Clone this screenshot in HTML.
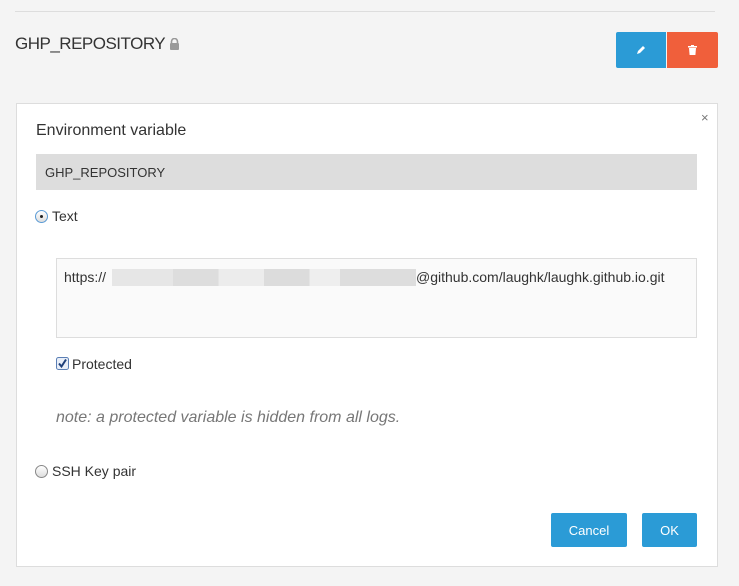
<!DOCTYPE html>
<html><head><style>
body{margin:0;width:739px;height:586px;background:#f4f4f4;font-family:"Liberation Sans",sans-serif;color:#333;position:relative;overflow:hidden}
.a{position:absolute}
.btn{position:absolute;color:#fff;font-size:13px;display:flex;align-items:center;justify-content:center;border-radius:2px}
.radio{position:absolute;width:11px;height:11px;border:1px solid #888;border-radius:50%;background:linear-gradient(#fff,#ddd)}
</style></head><body>
<div class="a" style="left:15px;top:11px;width:700px;height:1px;background:#ddd"></div>
<div class="a" style="left:15px;top:34px;font-size:17px;letter-spacing:-0.5px">GHP_REPOSITORY <svg width="11" height="12" viewBox="0 0 11 12" style="vertical-align:-1px"><path d="M2.5 5V3.5a3 3 0 0 1 6 0V5" fill="none" stroke="#999" stroke-width="1.6"/><rect x="1" y="5" width="9" height="7" rx="1" fill="#999"/></svg></div>
<div class="btn" style="left:616px;top:32px;width:50px;height:36px;background:#2b9bd6;border-radius:2px 0 0 2px"><svg width="10" height="10" viewBox="0 0 10 10"><path d="M1 9l1-3 5-5 2 2-5 5z" fill="#fff"/></svg></div>
<div class="btn" style="left:667px;top:32px;width:51px;height:36px;background:#f05f3b;border-radius:0 2px 2px 0"><svg width="9" height="10" viewBox="0 0 9 10"><rect x="0" y="1" width="9" height="1.5" fill="#fff"/><rect x="3" y="0" width="3" height="1.5" fill="#fff"/><path d="M1 3h7l-.6 7H1.6z" fill="#fff"/></svg></div>
<div class="a" style="left:16px;top:103px;width:700px;height:462px;background:#fff;border:1px solid #ddd"></div>
<div class="a" style="left:701px;top:110px;font-size:13px;color:#777">×</div>
<div class="a" style="left:36px;top:122px;font-size:16px">Environment variable</div>
<div class="a" style="left:36px;top:154px;width:661px;height:36px;background:#ddd"></div>
<div class="a" style="left:45px;top:165px;font-size:13px">GHP_REPOSITORY</div>
<div class="radio" style="left:35px;top:210px;border-color:#5b9bd5"><div style="position:absolute;left:4px;top:4px;width:3px;height:3px;border-radius:50%;background:#222"></div></div>
<div class="a" style="left:52px;top:208px;font-size:14px">Text</div>
<div class="a" style="left:56px;top:258px;width:639px;height:78px;background:#fafafa;border:1px solid #ddd"></div>
<div class="a" style="left:64px;top:269px;font-size:14px">https://</div>
<div class="a" style="left:112px;top:269px;width:304px;height:17px;background:linear-gradient(90deg,#e6e6e6 0 20%,#ddd 20% 35%,#ececec 35% 50%,#dcdcdc 50% 65%,#eee 65% 75%,#ddd 75% 100%)"></div>
<div class="a" style="left:416px;top:269px;font-size:14px">@github.com/laughk/laughk.github.io.git</div>
<svg class="a" style="left:56px;top:357px" width="13" height="13" viewBox="0 0 13 13"><rect x="0.5" y="0.5" width="12" height="12" rx="2" fill="#e8eef8" stroke="#5b7fb5"/><path d="M3 6.5l2.5 3L10 2.5" fill="none" stroke="#1d3f7a" stroke-width="2"/></svg>
<div class="a" style="left:72px;top:356px;font-size:14px">Protected</div>
<div class="a" style="left:56px;top:409px;font-size:16px;font-style:italic;color:#777">note: a protected variable is hidden from all logs.</div>
<div class="radio" style="left:35px;top:465px"></div>
<div class="a" style="left:52px;top:463px;font-size:14px">SSH Key pair</div>
<div class="btn" style="left:551px;top:513px;width:76px;height:34px;background:#2b9bd6">Cancel</div>
<div class="btn" style="left:642px;top:513px;width:55px;height:34px;background:#2b9bd6">OK</div>
</body></html>
